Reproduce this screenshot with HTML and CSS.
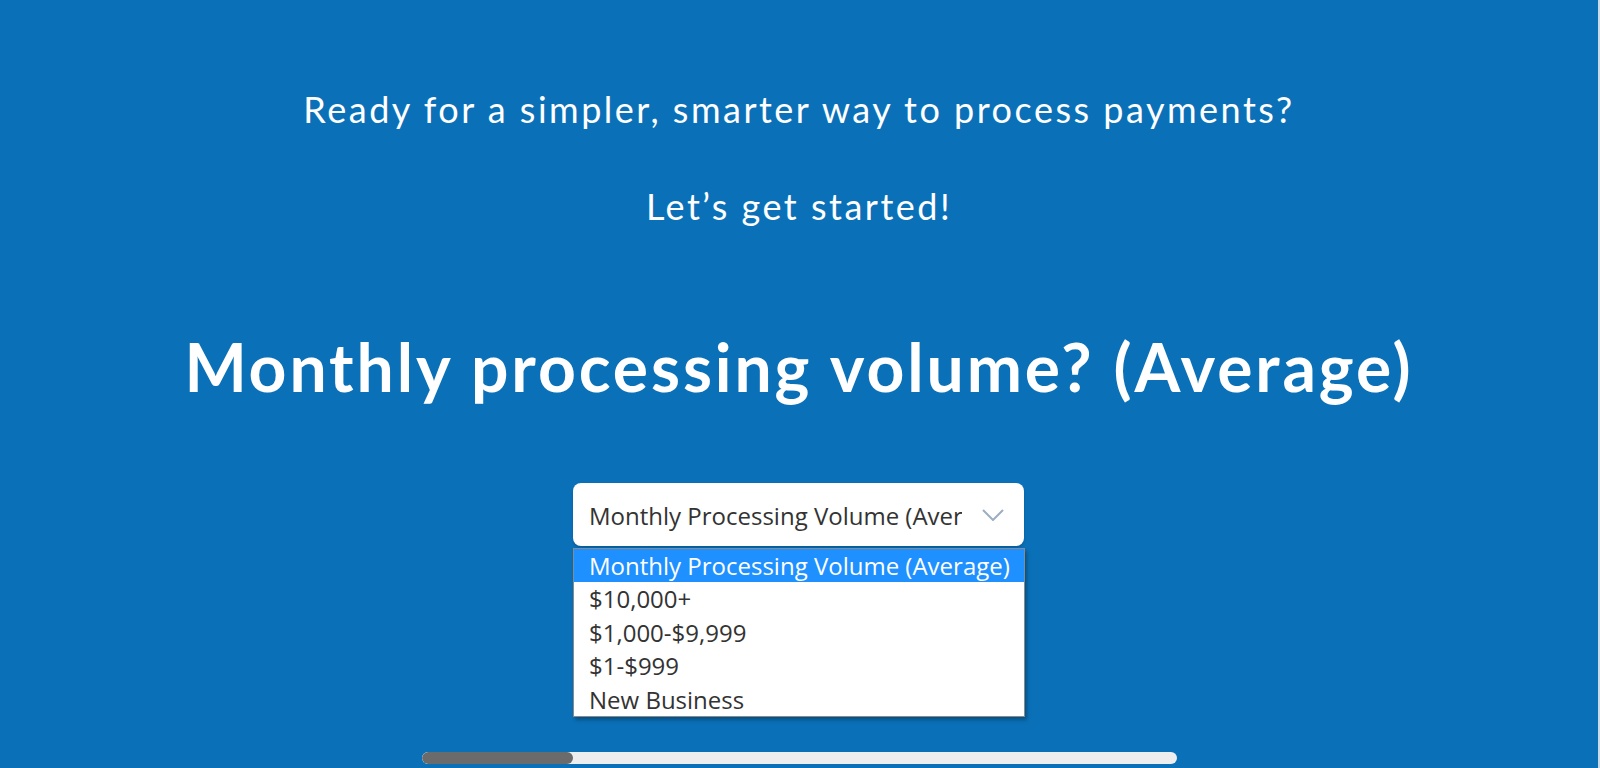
FILE: index.html
```html
<!DOCTYPE html>
<html lang="en">
<head>
<meta charset="utf-8">
<title>Get started</title>
<link rel="stylesheet" href="styles.css">
</head>
<body>
<div class="page">
  <main class="main">
    <p class="lead">Ready for a simpler, smarter way to process payments?</p>
    <p class="lead lead-2">Let’s get started!</p>
    <h1 class="question">Monthly processing volume? (Average)</h1>
    <div class="field">
      <div class="select">
        <span class="select-value">Monthly Processing Volume (Average)</span>
        <svg class="chevron" width="22" height="12" viewBox="0 0 22 12"><polyline points="1,1 11,11 21,1" fill="none" stroke="#9dadc2" stroke-width="2"/></svg>
      </div>
      <ul class="options">
        <li class="option active">Monthly Processing Volume (Average)</li>
        <li class="option">$10,000+</li>
        <li class="option">$1,000-$9,999</li>
        <li class="option">$1-$999</li>
        <li class="option">New Business</li>
      </ul>
    </div>
    <div class="progress"><div class="progress-fill" style="width:20%"></div></div>
  </main>
  <div class="edge"></div>
</div>
</body>
</html>
```
FILE: styles.css
```css
html, body {
  margin: 0;
  padding: 0;
  height: 100%;
  overflow: hidden;
}
body {
  background: #0a71b9;
  color: #fff;
}
.page {
  display: flex;
  height: 768px;
}
.main {
  flex: 1;
  display: flex;
  flex-direction: column;
  align-items: center;
  padding-top: 85px;
}
.edge {
  width: 2px;
  background: #c9dbe6;
}
.lead {
  margin: 0;
  font-family: Lato, "Open Sans", sans-serif;
  font-weight: 400;
  font-size: 36px;
  line-height: 48px;
  letter-spacing: 2.5px;
}
.lead-2 {
  margin-top: 49px;
}
.question {
  margin: 97px 0 0;
  font-family: Lato, "Open Sans", sans-serif;
  font-weight: 700;
  font-size: 66px;
  line-height: 80px;
  letter-spacing: 2.9px;
}
.field {
  margin-top: 76px;
  width: 452px;
  display: flex;
  flex-direction: column;
}
.select {
  box-sizing: border-box;
  width: 451px;
  height: 63px;
  background: #fff;
  border-radius: 8px;
  box-shadow: 0 2px 3px rgba(0, 0, 0, 0.18);
  display: flex;
  align-items: center;
  padding: 0 20px 0 16px;
  gap: 20px;
}
.select-value {
  flex: 1;
  overflow: hidden;
  white-space: nowrap;
  font-family: "Open Sans", sans-serif;
  font-size: 24px;
  color: #333;
  padding-top: 2px;
}
.chevron {
  flex: none;
}
.options {
  list-style: none;
  margin: 2px 0 0;
  padding: 0;
  box-sizing: border-box;
  width: 452px;
  background: #fff;
  border: 1px solid #8a8a8a;
  box-shadow: 2px 3px 4px rgba(0, 0, 0, 0.3);
}
.option {
  height: 33.4px;
  line-height: 33.4px;
  padding-left: 15px;
  font-family: "Open Sans", sans-serif;
  font-size: 24px;
  color: #333;
  white-space: nowrap;
}
.option.active {
  background: #1e90ff;
  color: #fff;
}
.progress {
  margin-top: 35px;
  width: 755px;
  height: 12px;
  background: #eeeeee;
  border-radius: 6px;
  overflow: hidden;
}
.progress-fill {
  height: 100%;
  background: #6b6b6b;
  border-radius: 6px;
}
```
